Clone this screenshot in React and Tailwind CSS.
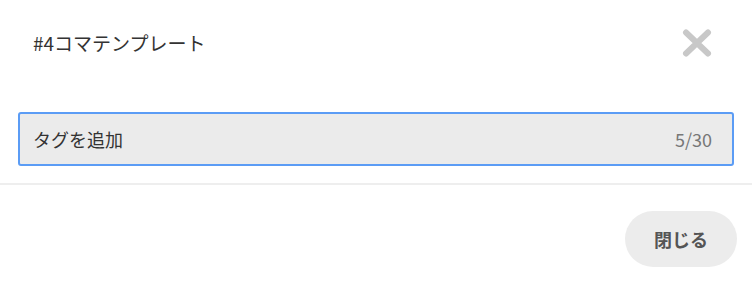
import React from 'react';

const font = { fontFamily: '"Noto Sans CJK JP", "Noto Sans", sans-serif' };

const CloseIcon = () => (
  <svg width="30" height="28" viewBox="0 0 30 28" fill="none">
    <path d="M4 3.5 L26 24.5 M26 3.5 L4 24.5" stroke="#c8c8c8" strokeWidth="6" strokeLinecap="round" />
  </svg>
);

export default function App() {
  return (
    <div className="w-[752px] h-[286px] bg-white" style={font}>
      <div className="flex h-[86px] items-center justify-between pl-[33px] pr-[40px]">
        <h2 className="text-[19px] text-[#333]">#4コマテンプレート</h2>
        <button className="flex items-center justify-center">
          <CloseIcon />
        </button>
      </div>

      <div className="px-[18px] pt-[26px]">
        <div className="flex h-[54px] w-[716px] items-center justify-between rounded-[3px] border-2 border-[#5b9cf5] bg-[#ebebeb] pl-[13px] pr-[20px]">
          <span className="text-[18px] text-[#333]">タグを追加</span>
          <span className="text-[18px] text-[#777]">5/30</span>
        </div>
      </div>

      <div className="mt-[17px] h-[2px] bg-[#eeeeee]" />

      <div className="flex justify-end pr-[15px] pt-[26px]">
        <button className="h-[56px] w-[112px] rounded-full bg-[#ececec] text-[18px] font-bold text-[#555]">
          閉じる
        </button>
      </div>
    </div>
  );
}
